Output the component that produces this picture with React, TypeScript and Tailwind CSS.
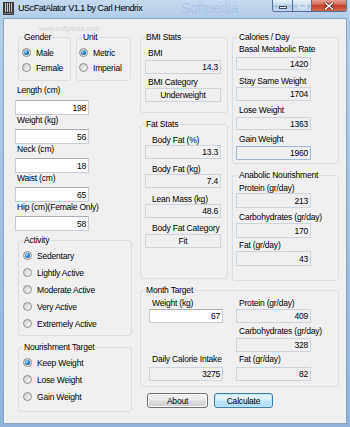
import React from "react";

function Radio({ checked }: { checked?: boolean }) {
  return (
    <span className="flex h-[9px] w-[9px] shrink-0 items-center justify-center rounded-full border border-[#8c8c8c] bg-[linear-gradient(135deg,#cdcdcd,#f8f8f8)]">
      {checked && (
        <span className="h-[5px] w-[5px] rounded-full bg-[radial-gradient(circle_at_35%_35%,#a6dcfb,#1f74c0_55%,#0d3d70)]" />
      )}
    </span>
  );
}

function RadioRow({ label, checked, className }: { label: string; checked?: boolean; className: string }) {
  return (
    <div className={"flex items-center gap-[5px] whitespace-nowrap " + className}>
      <Radio checked={checked} />
      <span>{label}</span>
    </div>
  );
}

function Group({
  title,
  className,
  legendClass,
  children,
}: {
  title: string;
  className: string;
  legendClass: string;
  children: React.ReactNode;
}) {
  return (
    <fieldset className={"min-w-0 rounded-[3px] border border-[#d5dfe5] " + className}>
      <legend className={"px-[1px] leading-[10px] whitespace-nowrap " + legendClass}>{title}</legend>
      {children}
    </fieldset>
  );
}

function Label({ text, className }: { text: string; className: string }) {
  return <div className={"h-[10px] whitespace-nowrap " + className}>{text}</div>;
}

function Input({ v, className }: { v: string; className: string }) {
  return (
    <div
      className={
        "flex items-center justify-end border border-[#c9ccd3] border-t-[#abadb3] bg-white pr-[2px] " + className
      }
    >
      {v}
    </div>
  );
}

function RO({ v, className }: { v: string; className: string }) {
  return (
    <div className={"flex items-center border border-[#cdd4dc] bg-[#f0f0f0] px-[2px] " + className}>{v}</div>
  );
}

export default function App() {
  return (
    <div className="flex h-[427px] w-[350px] flex-col overflow-hidden bg-[linear-gradient(180deg,#c6daee_0px,#b3cde7_18px,#8fb3db_100%)] px-[3px] pb-[3px] font-['Liberation_Sans',Arial,sans-serif] text-[8.5px] leading-[10px] tracking-[-0.2px] text-black">
      {/* Title bar */}
      <div className="relative flex h-[18px] shrink-0 items-start">
        <svg width="11" height="13" viewBox="0 0 11 13" className="mt-[2px] shrink-0">
          <rect x="0" y="0" width="11" height="13" fill="#3a3a3a" />
          <rect x="2" y="1" width="1" height="9" fill="#c8c8c8" />
          <rect x="4" y="1" width="1" height="9" fill="#c8c8c8" />
          <rect x="6" y="1" width="1" height="9" fill="#c8c8c8" />
          <rect x="8" y="1" width="1" height="9" fill="#c8c8c8" />
          <rect x="1" y="11" width="9" height="1" fill="#777" />
        </svg>
        <span className="ml-[4px] mt-[3px] whitespace-nowrap text-[9px] leading-[11px] tracking-[-0.45px] text-black">
          UScFatAlator V1.1 by Carl Hendrix
        </span>
        <span className="pointer-events-none absolute left-[178px] top-[1px] text-[14px] leading-[15px] text-[#9cb9da] opacity-50">
          Softpedia
        </span>
        <div className="ml-auto flex h-[12px] overflow-hidden rounded-b-[3px] border border-t-0 border-[#51709a]">
          <div className="flex w-[20px] items-center justify-center border-r border-[#51709a] bg-[linear-gradient(180deg,#e9f0f8,#c9d9ea_45%,#aec5de_50%,#c8daee)]">
            <span className="mt-[4px] h-[3px] w-[8px] border border-[#3a4c63] bg-white" />
          </div>
          <div className="flex w-[19px] items-center justify-center border-r border-[#51709a] bg-[linear-gradient(180deg,#e9f0f8,#c9d9ea_45%,#aec5de_50%,#c8daee)]">
            <span className="h-[7px] w-[9px] border-[2px] border-[#dfe8f2] opacity-80" />
          </div>
          <div className="flex w-[34px] items-center justify-center bg-[linear-gradient(180deg,#e6a08f,#d3654f_45%,#c2402a_50%,#d26a4f)]">
            <svg width="10" height="8" viewBox="0 0 10 8">
              <path d="M1.5 1 L8.5 7 M8.5 1 L1.5 7" stroke="#5a2118" strokeWidth="3" strokeLinecap="square" />
              <path d="M1.5 1 L8.5 7 M8.5 1 L1.5 7" stroke="#ffffff" strokeWidth="1.6" strokeLinecap="square" />
            </svg>
          </div>
        </div>
      </div>

      {/* Client area */}
      <div className="relative flex flex-1 border border-[#8ba5c4] bg-[#f0f0f0] pl-[11px] pt-[13px]">
        <span className="pointer-events-none absolute left-[35px] top-[6px] text-[7px] leading-[8px] tracking-[0px] text-[#d4d4d4]">
          www.softpedia.com
        </span>

        {/* Left column */}
        <div className="flex w-[117px] shrink-0 flex-col">
          <div className="ml-[3px] flex gap-[5px]">
            <Group title="Gender" className="h-[49px] w-[53px]" legendClass="ml-[4px]">
              <RadioRow label="Male" checked className="ml-[3px] mt-[3px] h-[15px]" />
              <RadioRow label="Female" className="ml-[3px] h-[15px]" />
            </Group>
            <Group title="Unit" className="h-[49px] w-[55px]" legendClass="ml-[5px]">
              <RadioRow label="Metric" checked className="ml-[2px] mt-[3px] h-[15px]" />
              <RadioRow label="Imperial" className="ml-[2px] h-[15px]" />
            </Group>
          </div>

          <Label text="Length (cm)" className="mt-[4px] pl-[2px]" />
          <Input v="198" className="mt-[5px] h-[15px] w-[74px]" />
          <Label text="Weight (kg)" className="pl-[2px]" />
          <Input v="56" className="mt-[4px] h-[15px] w-[74px]" />
          <Label text="Neck (cm)" className="pl-[2px]" />
          <Input v="18" className="mt-[4px] h-[15px] w-[74px]" />
          <Label text="Waist (cm)" className="pl-[2px]" />
          <Input v="65" className="mt-[4px] h-[15px] w-[74px]" />
          <Label text="Hip (cm)(Female Only)" className="pl-[2px]" />
          <Input v="58" className="mt-[4px] h-[15px] w-[74px]" />

          <Group title="Activity" className="ml-[3px] mt-[4px] h-[101px] w-[114px]" legendClass="ml-[4px]">
            <RadioRow label="Sedentary" checked className="ml-[4px] mt-[2px] h-[17px]" />
            <RadioRow label="Lightly Active" className="ml-[4px] h-[17px]" />
            <RadioRow label="Moderate Active" className="ml-[4px] h-[17px]" />
            <RadioRow label="Very Active" className="ml-[4px] h-[17px]" />
            <RadioRow label="Extremely Active" className="ml-[4px] h-[17px]" />
          </Group>

          <Group title="Nourishment Target" className="ml-[3px] mt-[6px] h-[70px] w-[114px]" legendClass="ml-[4px]">
            <RadioRow label="Keep Weight" checked className="ml-[4px] mt-[2px] h-[17px]" />
            <RadioRow label="Lose Weight" className="ml-[4px] h-[17px]" />
            <RadioRow label="Gain Weight" className="ml-[4px] h-[17px]" />
          </Group>
        </div>

        {/* Right column */}
        <div className="ml-[8px] flex w-[199px] shrink-0 flex-col">
          <div className="flex items-start gap-[4px]">
            <div className="flex w-[88px] flex-col">
              <Group title="BMI Stats" className="h-[81px] w-[88px]" legendClass="ml-[4px]">
                <Label text="BMI" className="mt-[6px] pl-[7px]" />
                <RO v="14.3" className="ml-[4px] mt-[2px] h-[14px] w-[76px] justify-end" />
                <Label text="BMI Category" className="mt-[3px] pl-[7px]" />
                <RO v="Underweight" className="ml-[4px] mt-[1px] h-[14px] w-[76px] justify-center" />
              </Group>
              <Group title="Fat Stats" className="mt-[6px] h-[160px] w-[88px]" legendClass="ml-[4px]">
                <Label text="Body Fat (%)" className="mt-[6px] pl-[11px]" />
                <RO v="13.3" className="ml-[4px] h-[14px] w-[76px] justify-end" />
                <Label text="Body Fat (kg)" className="mt-[5px] pl-[11px]" />
                <RO v="7.4" className="ml-[4px] h-[14px] w-[76px] justify-end" />
                <Label text="Lean Mass (kg)" className="mt-[6px] pl-[11px]" />
                <RO v="48.6" className="ml-[4px] h-[14px] w-[76px] justify-end" />
                <Label text="Body Fat Category" className="mt-[5px] pl-[11px]" />
                <RO v="Fit" className="ml-[4px] mt-[1px] h-[14px] w-[76px] justify-center" />
              </Group>
            </div>
            <div className="flex w-[107px] flex-col">
              <Group title="Calories / Day" className="h-[132px] w-[107px]" legendClass="ml-[5px]">
                <Label text="Basal Metabolic Rate" className="mt-[2px] pl-[6px]" />
                <RO v="1420" className="ml-[3px] mt-[3px] h-[13px] w-[75px] justify-end" />
                <Label text="Stay Same Weight" className="mt-[6px] pl-[6px]" />
                <RO v="1704" className="ml-[3px] mt-[1px] h-[14px] w-[75px] justify-end" />
                <Label text="Lose Weight" className="mt-[4px] pl-[6px]" />
                <RO v="1363" className="ml-[3px] mt-[2px] h-[13px] w-[75px] justify-end" />
                <Label text="Gain Weight" className="mt-[4px] pl-[6px]" />
                <div className="ml-[3px] mt-[2px] flex h-[14px] w-[75px] items-center justify-end border border-[#9bb8d6] bg-[#f0f0f0] px-[2px]">
                  1960
                </div>
              </Group>
              <Group title="Anabolic Nourishment" className="mt-[6px] h-[111px] w-[107px]" legendClass="ml-[5px]">
                <Label text="Protein (gr/day)" className="mt-[3px] pl-[6px]" />
                <RO v="213" className="ml-[3px] h-[15px] w-[75px] justify-end" />
                <Label text="Carbohydrates (gr/day)" className="mt-[4px] pl-[6px]" />
                <RO v="170" className="ml-[3px] mt-[1px] h-[15px] w-[75px] justify-end" />
                <Label text="Fat (gr/day)" className="mt-[2px] pl-[6px]" />
                <RO v="43" className="ml-[3px] mt-[1px] h-[15px] w-[75px] justify-end" />
              </Group>
            </div>
          </div>

          <Group title="Month Target" className="mt-[4px] h-[102px] w-[199px]" legendClass="ml-[4px]">
            <div className="flex">
              <div className="ml-[8px] flex w-[74px] flex-col">
                <Label text="Weight (kg)" className="mt-[3px] pl-[3px]" />
                <Input v="67" className="mt-[1px] h-[14px] w-[74px]" />
                <Label text="Daily Calorie Intake" className="mt-[31px] pl-[3px]" />
                <RO v="3275" className="mt-[3px] h-[14px] w-[74px] justify-end" />
              </div>
              <div className="ml-[13px] flex w-[75px] flex-col">
                <Label text="Protein (gr/day)" className="mt-[3px] pl-[3px]" />
                <RO v="409" className="mt-[1px] h-[14px] w-[75px] justify-end" />
                <Label text="Carbohydrates (gr/day)" className="mt-[3px] pl-[3px]" />
                <RO v="328" className="mt-[2px] h-[14px] w-[75px] justify-end" />
                <Label text="Fat (gr/day)" className="mt-[2px] pl-[3px]" />
                <RO v="82" className="mt-[3px] h-[14px] w-[75px] justify-end" />
              </div>
            </div>
          </Group>

          <div className="ml-[7px] mt-[6px] flex gap-[6px]">
            <button className="flex h-[15px] w-[61px] items-center justify-center rounded-[3px] border border-[#707070] bg-[linear-gradient(180deg,#f2f2f2_0%,#ebebeb_48%,#dddddd_52%,#cfcfcf_100%)] shadow-[inset_0_0_0_1px_#fcfcfc]">
              About
            </button>
            <button className="flex h-[15px] w-[59px] items-center justify-center rounded-[3px] border border-[#3c7fb1] bg-[linear-gradient(180deg,#eaf6fd_0%,#d9f0fc_48%,#bee6fd_52%,#a7d9f5_100%)] shadow-[inset_0_0_0_1px_#c4e5f6]">
              Calculate
            </button>
          </div>
        </div>
      </div>
    </div>
  );
}
